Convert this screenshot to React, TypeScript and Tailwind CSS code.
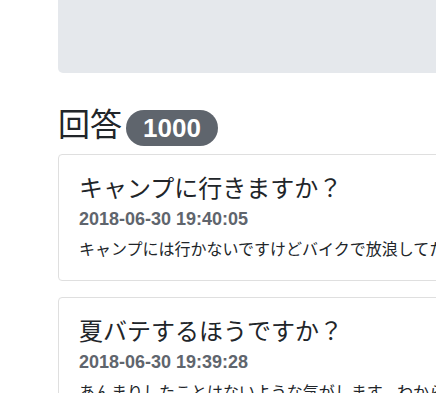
const answers = [
  {
    title: "キャンプに行きますか？",
    date: "2018-06-30 19:40:05",
    body: "キャンプには行かないですけどバイクで放浪してたりします。",
  },
  {
    title: "夏バテするほうですか？",
    date: "2018-06-30 19:39:28",
    body: "あんまりしたことはないような気がします。わからないですけど。",
  },
];

export default function App() {
  return (
    <div className="min-h-screen w-full overflow-hidden bg-white text-[#212529]">
      <div className="ml-[58px] w-[720px]">
        {/* jumbotron */}
        <div className="h-[73px] rounded-b-[5px] bg-[#e5e8ec]" />

        {/* heading */}
        <div className="mt-[29px] flex items-start">
          <h2 className="font-['Noto_Sans_CJK_JP',sans-serif] text-[32px] font-normal leading-[40px]">回答</h2>
          <span className="ml-[4px] mt-[8px] flex h-[36px] items-center rounded-full bg-[#5f656d] px-[17px] font-['Liberation_Sans',sans-serif] text-[26px] font-bold leading-none text-white">
            1000
          </span>
        </div>

        {/* answers */}
        <div className="mt-[8px] flex flex-col gap-[16px]">
          {answers.map((a) => (
            <div key={a.date} className="rounded-[4px] border border-[#dfdfdf] px-[20px] pb-[20px] pt-[17px]">
              <h4 className="font-['Noto_Sans_CJK_JP',sans-serif] text-[24px] font-normal leading-[29px]">{a.title}</h4>
              <div className="mt-[8px] font-['Liberation_Sans',sans-serif] text-[18px] font-bold leading-[21px] text-[#5f656d]">
                {a.date}
              </div>
              <p className="mt-[6px] whitespace-nowrap font-['Noto_Sans_CJK_JP',sans-serif] text-[16px] leading-[24px]">
                {a.body}
              </p>
            </div>
          ))}
        </div>
      </div>
    </div>
  );
}
